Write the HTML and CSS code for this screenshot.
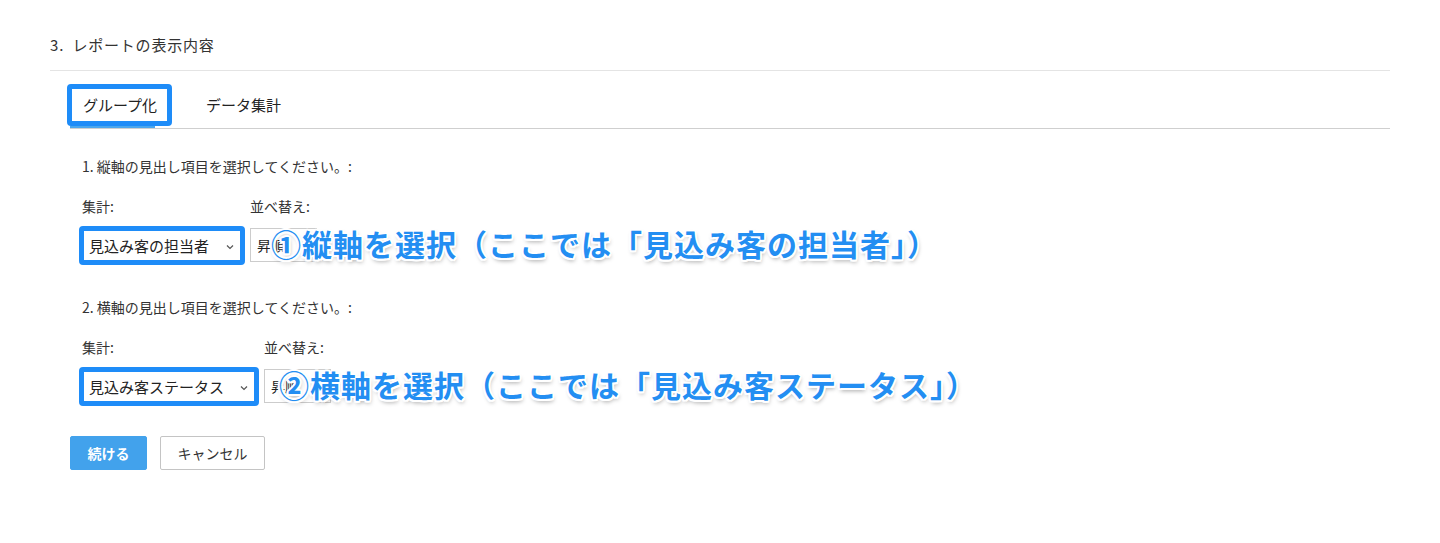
FILE: index.html
```html
<!DOCTYPE html>
<html lang="ja">
<head>
<meta charset="utf-8">
<title>レポートの表示内容</title>
<link rel="stylesheet" href="styles.css">
</head>
<body>
<div class="page">
  <h2 class="heading">3.&nbsp; レポートの表示内容</h2>
  <div class="tabbar">
    <div class="tab tab-active">グループ化</div>
    <div class="tab">データ集計</div>
  </div>
  <div class="content">
    <p class="question">1. 縦軸の見出し項目を選択してください。:</p>
    <div class="row">
      <div class="field">
        <div class="label">集計:</div>
        <div class="select select-hl w1">
          <span>見込み客の担当者</span>
          <svg class="chev" width="8" height="6" viewBox="0 0 8 6"><path d="M1 1.5 L4 4.5 L7 1.5" fill="none" stroke="#555" stroke-width="1.2"/></svg>
        </div>
      </div>
      <div class="field">
        <div class="label">並べ替え:</div>
        <div class="select sort"><span>昇順</span></div>
      </div>
      <div class="callout c1">①縦軸を選択（ここでは「見込み客の担当者」）</div>
    </div>

    <p class="question q2">2. 横軸の見出し項目を選択してください。:</p>
    <div class="row">
      <div class="field">
        <div class="label">集計:</div>
        <div class="select select-hl w2">
          <span>見込み客ステータス</span>
          <svg class="chev" width="8" height="6" viewBox="0 0 8 6"><path d="M1 1.5 L4 4.5 L7 1.5" fill="none" stroke="#555" stroke-width="1.2"/></svg>
        </div>
      </div>
      <div class="field">
        <div class="label">並べ替え:</div>
        <div class="select sort"><span>昇順</span></div>
      </div>
      <div class="callout c2">②横軸を選択（ここでは「見込み客ステータス」）</div>
    </div>

    <div class="buttons">
      <button class="btn btn-primary">続ける</button>
      <button class="btn btn-secondary">キャンセル</button>
    </div>
  </div>
</div>
</body>
</html>
```

FILE: styles.css
```css
*, *::before, *::after { box-sizing: border-box; }
html, body {
  margin: 0;
  padding: 0;
  background: #fff;
}
body {
  font-family: "Noto Sans CJK JP", "Noto Sans", sans-serif;
  color: #333;
}
.page {
  width: 1340px;
  margin-left: 50px;
  padding-top: 33px;
}
.heading {
  margin: 0;
  font-size: 15px;
  font-weight: normal;
  line-height: 24px;
  letter-spacing: 0.8px;
  color: #333;
  padding-bottom: 13px;
  border-bottom: 1px solid #e4e4e4;
}
.tabbar {
  display: flex;
  margin-left: 20px;
  padding-top: 15px;
  padding-bottom: 2px;
  border-bottom: 1px solid #cfcfcf;
  gap: 22px;
}
.tab {
  position: relative;
  height: 40px;
  line-height: 38px;
  padding: 0 14px 0 13px;
  font-size: 15px;
  color: #222;
}
.tab-active::after {
  content: "";
  position: absolute;
  left: 0;
  width: 85px;
  bottom: -2px;
  height: 2px;
  background: #4aa6ee;
}
.tab-active::before {
  content: "";
  position: absolute;
  left: -3px;
  top: -2px;
  width: 105px;
  height: 42px;
  border: 5px solid #1e8cf8;
  border-radius: 4px;
  z-index: 1;
}
.content {
  padding-left: 32px;
}
.question {
  margin: 27px 0 0;
  font-size: 14px;
  line-height: 20px;
  color: #333;
}
.q2 {
  margin-top: 35px;
}
.row {
  position: relative;
  display: flex;
  gap: 8px;
  margin-top: 20px;
}
.field {
  display: flex;
  flex-direction: column;
  gap: 12px;
}
.label {
  font-size: 14px;
  line-height: 20px;
  color: #333;
}
.select {
  position: relative;
  height: 34px;
  border: 1px solid #cccccc;
  background: #fff;
  display: flex;
  align-items: center;
  padding-left: 6px;
  font-size: 15px;
  color: #222;
}
.select-hl::after {
  content: "";
  position: absolute;
  left: -4px;
  right: -4px;
  top: -3px;
  bottom: -4px;
  border: 5px solid #1e8cf8;
  border-radius: 4px;
}
.w1 { width: 160px; }
.w2 { width: 174px; }
.sort {
  width: 67px;
  font-size: 14px;
}
.chev {
  position: absolute;
  right: 7px;
  top: 15px;
}
.callout {
  position: absolute;
  font-size: 30px;
  font-weight: bold;
  letter-spacing: 1px;
  line-height: 36px;
  white-space: nowrap;
  color: #238ef2;
  text-shadow:
    2px 0 0 #fff, -2px 0 0 #fff, 0 2px 0 #fff, 0 -2px 0 #fff,
    1.5px 1.5px 0 #fff, -1.5px 1.5px 0 #fff, 1.5px -1.5px 0 #fff, -1.5px -1.5px 0 #fff,
    1px 3px 4px rgba(0,0,0,0.35);
  z-index: 2;
}
.c1 { left: 189px; top: 29px; }
.c2 { left: 197px; top: 29px; }
.buttons {
  display: flex;
  gap: 13px;
  margin-top: 33px;
  margin-left: -12px;
}
.btn {
  font-family: "Noto Sans CJK JP", "Noto Sans", sans-serif;
  height: 34px;
  font-size: 14px;
  border-radius: 2px;
  cursor: pointer;
}
.btn-primary {
  width: 77px;
  background: #42a2ec;
  border: 1px solid #42a2ec;
  color: #fff;
  font-weight: bold;
}
.btn-secondary {
  width: 105px;
  background: #fff;
  border: 1px solid #c4c4c4;
  color: #333;
}
```
